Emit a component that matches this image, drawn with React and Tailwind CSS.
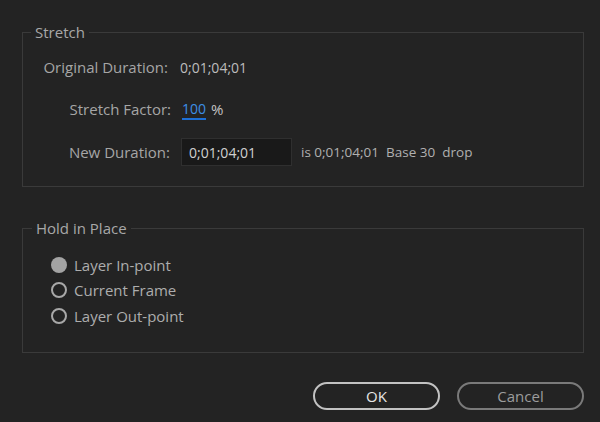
import React, { useState } from 'react';

const font = { fontFamily: '"Open Sans", "Liberation Sans", sans-serif' };

const Radio = ({ checked, label, onClick }) => (
  <div className="flex items-center h-[25.5px] cursor-pointer" onClick={onClick}>
    {checked ? (
      <div className="w-[16px] h-[16px] rounded-full bg-[#a3a3a3]"></div>
    ) : (
      <div className="w-[16px] h-[16px] rounded-full border-2 border-[#a8a8a8]"></div>
    )}
    <span className="ml-[7px] text-[15px] text-[#adadad]">{label}</span>
  </div>
);

const App = () => {
  const [hold, setHold] = useState('in');

  return (
    <div className="w-[600px] h-[422px] bg-[#232323] overflow-hidden" style={font}>
      {/* Stretch */}
      <fieldset className="ml-[22px] mt-[22px] w-[562px] h-[165px] border border-[#3a3a3a]">
        <legend className="ml-[8px] px-[4px] h-[20px] leading-[20px] text-[15px] text-[#a8a8a8]">Stretch</legend>
        <div className="pt-[11px] flex flex-col gap-[14.5px]">
          <div className="flex items-center h-[28px]">
            <div className="w-[145px] text-right text-[15px] text-[#a6a6a6]">Original Duration:</div>
            <div className="ml-[12px] text-[14px] text-[#bdbdbd]">0;01;04;01</div>
          </div>
          <div className="flex items-center h-[28px]">
            <div className="w-[148px] text-right text-[15px] text-[#a6a6a6]">Stretch Factor:</div>
            <div className="ml-[11px] text-[14px] text-[#3d8fe6] border-b-2 border-[#1d6fd6] leading-[18px]">100</div>
            <div className="ml-[5px] text-[15px] text-[#c4c4c4]">%</div>
          </div>
          <div className="flex items-center h-[28px]">
            <div className="w-[147px] text-right text-[15px] text-[#a6a6a6]">New Duration:</div>
            <div className="ml-[11px] w-[111px] h-[28px] bg-[#191919] border border-[#2f2f2f] flex items-center pl-[7px] text-[14px] text-[#d0d0d0]">0;01;04;01</div>
            <div className="ml-[9px] text-[13.5px] text-[#b0b0b0] whitespace-pre">is 0;01;04;01  Base 30  drop</div>
          </div>
        </div>
      </fieldset>

      {/* Hold in Place */}
      <fieldset className="ml-[22px] mt-[31px] w-[562px] h-[135px] border border-[#3a3a3a]">
        <legend className="ml-[9px] px-[4px] h-[20px] leading-[20px] text-[15px] text-[#a8a8a8]">Hold in Place</legend>
        <div className="pt-[14px] pl-[28px]">
          <Radio checked={hold === 'in'} label="Layer In-point" onClick={() => setHold('in')} />
          <Radio checked={hold === 'current'} label="Current Frame" onClick={() => setHold('current')} />
          <Radio checked={hold === 'out'} label="Layer Out-point" onClick={() => setHold('out')} />
        </div>
      </fieldset>

      {/* Buttons */}
      <div className="mt-[29px] flex justify-end gap-[17px] pr-[16px]">
        <button className="w-[127px] h-[28px] rounded-full border-2 border-[#c2c2c2] text-[15px] text-[#e6e6e6]">OK</button>
        <button className="w-[127px] h-[28px] rounded-full border-2 border-[#7a7a7a] text-[15px] text-[#9c9c9c]">Cancel</button>
      </div>
    </div>
  );
};

export default App;
